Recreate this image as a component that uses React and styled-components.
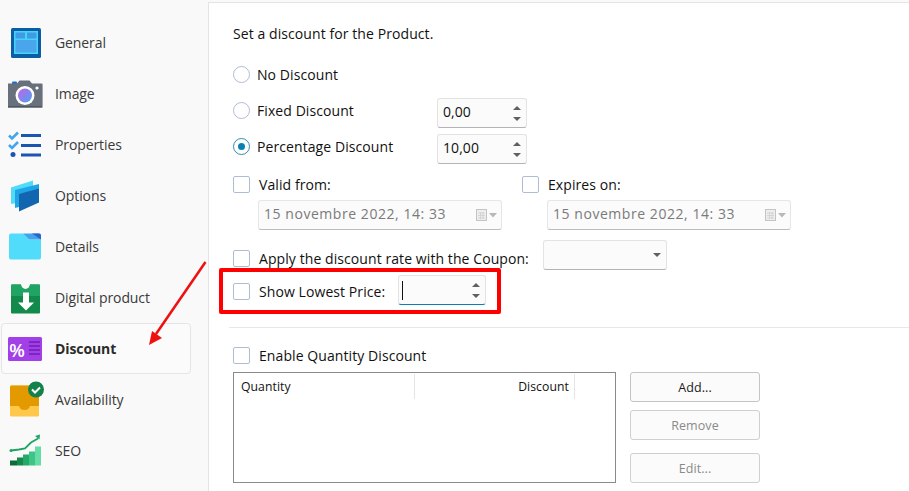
import React from 'react';
import styled, { createGlobalStyle } from 'styled-components';

const Global = createGlobalStyle`
  html, body { margin: 0; padding: 0; background: #f9f9f9; overflow: hidden; }
  body { font-family: "Open Sans", "Noto Sans", "Liberation Sans", sans-serif; font-size: 14px; color: #111; }
`;

const Page = styled.div`
  position: relative;
  display: flex;
  width: 909px;
  height: 491px;
  overflow: hidden;
  background: #f9f9f9;
`;

/* sidebar */
const Sidebar = styled.nav`
  flex: 0 0 208px;
  box-sizing: border-box;
  padding: 17px 17px 0 1px;
  display: flex;
  flex-direction: column;
`;
const NavItem = styled.div`
  box-sizing: border-box;
  height: 51px;
  flex: none;
  display: flex;
  align-items: center;
  gap: 10px;
  padding-left: 3px;
  border-radius: 4px;
  border: 1px solid ${p => (p.$active ? '#e5e5e5' : 'transparent')};
  background: ${p => (p.$active ? '#fbfbfb' : 'transparent')};
  color: ${p => (p.$active ? '#2b2b2b' : '#3a3a3a')};
  font-weight: ${p => (p.$active ? 700 : 400)};
  letter-spacing: -0.1px;
`;
const IconBox = styled.svg`
  flex: none;
  width: 40px;
  height: 40px;
`;

const GeneralIcon = () => (
  <IconBox viewBox="0 0 40 40">
    <rect x="6" y="5" width="30" height="30" rx="1.5" fill="#0b5ea6" />
    <rect x="9" y="8" width="24" height="23" fill="#46d3f4" />
    <rect x="10.5" y="9.5" width="9.5" height="6" fill="#3f9be6" />
    <rect x="22" y="9.5" width="9.5" height="6" fill="#3f9be6" />
    <rect x="10.5" y="17" width="21" height="12.5" fill="#49a6ec" />
  </IconBox>
);
const ImageIcon = () => (
  <IconBox viewBox="0 0 40 40">
    <rect x="7" y="7.500" width="5" height="4" rx="1" fill="#1f6fd0" />
    <path d="M3 9.500h9l2.500-3h10l2.500 3h9.600a1 1 0 0 1 1 1V33.500H3z" fill="#68717b" />
    <rect x="3" y="32" width="34" height="1.500" fill="#4f5660" />
    <circle cx="20" cy="21.500" r="9.500" fill="#fff" />
    <circle cx="20" cy="21.500" r="7" fill="url(#lens)" />
    <circle cx="32" cy="14" r="1.600" fill="#fff" />
    <defs>
      <linearGradient id="lens" x1="0" y1="0" x2="1" y2="1">
        <stop offset="0" stopColor="#c264e8" />
        <stop offset="1" stopColor="#4aa3f0" />
      </linearGradient>
    </defs>
  </IconBox>
);
const PropertiesIcon = () => (
  <IconBox viewBox="0 0 40 40">
    <path d="M4 10.500l3 3 6-6M4 20l3 3 6-6" fill="none" stroke="#42a5ee" strokeWidth="2.600" />
    <circle cx="8" cy="29.500" r="2.500" fill="#1c55b0" />
    <rect x="16" y="9" width="20" height="3" fill="#1c55b0" />
    <rect x="16" y="19" width="20" height="3" fill="#1c55b0" />
    <rect x="16" y="28.500" width="20" height="3" fill="#1c55b0" />
  </IconBox>
);
const OptionsIcon = () => (
  <IconBox viewBox="0 0 40 40">
    <path d="M6 11.500L28 4.500V24L6 28z" fill="#4fdcfb" />
    <path d="M10 14L34 8V26L10 32z" fill="#1fa5e6" />
    <path d="M14 18L34 12.500V26.500L14 35.500z" fill="#1266b0" />
  </IconBox>
);
const DetailsIcon = () => (
  <IconBox viewBox="0 0 40 40">
    <path d="M4 8.500a2 2 0 0 1 2-2h12l6 6h12v18a2 2 0 0 1-2 2H6a2 2 0 0 1-2-2z" fill="#52dcfb" />
    <path d="M18 6.500h16a2 2 0 0 1 2 2v4H24z" fill="#42a4ea" />
    <path d="M27 6.500h7a2 2 0 0 1 2 2v4z" fill="#2a64c8" />
  </IconBox>
);
const DigitalIcon = () => (
  <IconBox viewBox="0 0 40 40">
    <path d="M7 6.500h9a4.500 4.500 0 0 0 9 0h9a1 1 0 0 1 1 1v27a1 1 0 0 1-1 1H7a1 1 0 0 1-1-1v-27a1 1 0 0 1 1-1z" fill="#118a4c" />
    <path d="M6 7.500a1 1 0 0 1 1-1h9a4.500 4.500 0 0 0 9 0h9a1 1 0 0 1 1 1V18H6z" fill="#1fa463" />
    <path d="M18 14.500h6v10h5L21 32.500 13 24.500h5z" fill="#fff" />
  </IconBox>
);
const DiscountIcon = () => (
  <IconBox viewBox="0 0 40 40">
    <rect x="3" y="8" width="34" height="24" rx="1.500" fill="#a33fe6" />
    <text x="4.500" y="27.500" fontFamily="Liberation Sans, sans-serif" fontSize="19" fontWeight="700" fill="#fff" textLength="15" lengthAdjust="spacingAndGlyphs">%</text>
    <path d="M24 13h11M24 17h11M24 21h11M24 25h11" stroke="#6f1fb5" strokeWidth="1.600" />
  </IconBox>
);
const AvailabilityIcon = () => (
  <IconBox viewBox="0 0 40 40">
    <rect x="5" y="5.500" width="29" height="31" rx="1.500" fill="#ffc84a" />
    <path d="M5 7A1.500 1.500 0 0 1 6.500 5.500H32.500A1.500 1.500 0 0 1 34 7V26H25c-1 3-3 4-5.500 4S15 29 14 26H5z" fill="#e29a00" />
    <circle cx="31" cy="9.500" r="8" fill="#13824a" />
    <path d="M27 9.500l3 3 5-5" fill="none" stroke="#fff" strokeWidth="2" />
  </IconBox>
);
const SeoIcon = () => (
  <IconBox viewBox="0 0 40 40">
    <rect x="5" y="29.500" width="7" height="5" fill="#0e6b3a" />
    <rect x="12" y="26.500" width="6" height="8" fill="#14894c" />
    <rect x="18" y="23.500" width="6" height="11" fill="#25a96a" />
    <rect x="24" y="20.500" width="6" height="14" fill="#3cc587" />
    <rect x="30" y="15.500" width="6" height="19" fill="#66dca6" />
    <path d="M6 19.500l8-1 6-1 6-6 7-4" fill="none" stroke="#1ea563" strokeWidth="1.800" />
    <path d="M30 5l5-1.500-.5 5z" fill="#1ea563" />
    <circle cx="6" cy="19.500" r="1.500" fill="#1ea563" />
  </IconBox>
);

const navItems = [
  ['General', GeneralIcon],
  ['Image', ImageIcon],
  ['Properties', PropertiesIcon],
  ['Options', OptionsIcon],
  ['Details', DetailsIcon],
  ['Digital product', DigitalIcon],
  ['Discount', DiscountIcon],
  ['Availability', AvailabilityIcon],
  ['SEO', SeoIcon],
];

/* main form */
const Main = styled.main`
  flex: 1;
  min-width: 0;
  box-sizing: border-box;
  margin-top: 2px;
  padding: 21px 0 0 24px;
  background: #fff;
  border-top: 1px solid #e4e4e4;
  border-left: 1px solid #e4e4e4;
  letter-spacing: 0.08px;
`;
const Title = styled.div`
  height: 19px;
  line-height: 19px;
  margin-bottom: 19px;
`;
const Row = styled.div`
  display: flex;
  align-items: flex-start;
  height: ${p => p.$h || 30}px;
  margin-top: ${p => p.$mt || 0}px;
  margin-bottom: ${p => p.$mb || 0}px;
`;
/* holds the radio or check with its label; height sets where they sit in the row */
const Lead = styled.div`
  flex: none;
  display: flex;
  align-items: center;
  height: ${p => p.$h || 24}px;
  width: ${p => (p.$w ? `${p.$w}px` : 'auto')};
`;
const RadioCircle = styled.span`
  box-sizing: border-box;
  flex: none;
  width: 17px;
  height: 17px;
  border-radius: 50%;
  border: 1px solid ${p => (p.$on ? '#2a8fb5' : '#aebdd4')};
  background: #fff;
  display: flex;
  align-items: center;
  justify-content: center;
  &::after {
    content: '';
    display: ${p => (p.$on ? 'block' : 'none')};
    width: 7px;
    height: 7px;
    border-radius: 50%;
    background: #0a7fb0;
  }
`;
const Check = styled.span`
  box-sizing: border-box;
  flex: none;
  width: 17px;
  height: 17px;
  border-radius: 2px;
  border: 1px solid #aebdd4;
  background: #fff;
`;
const RadioLabel = styled.label`
  margin-left: 7px;
`;
const CheckLabel = styled.label`
  margin-left: 9px;
`;
const FieldBase = styled.div`
  box-sizing: border-box;
  flex: none;
  height: 30px;
  display: flex;
  align-items: center;
  border-radius: 3px;
  border: 1px solid #e3e3e3;
  border-bottom: 1px solid ${p => (p.$focus ? '#0a7fb0' : '#b4b4b4')};
  background: #fbfbfb;
`;
const FieldText = styled.span`
  margin-bottom: 3px;
`;
const Spin = styled(FieldBase)`
  width: ${p => p.$w}px;
  margin-left: ${p => p.$ml || 0}px;
  padding: 0 5px;
  justify-content: space-between;
`;
const SpinArrows = styled.span`
  display: flex;
  flex-direction: column;
  gap: 7px;
`;
const Tri = styled.span`
  display: block;
  width: 0;
  height: 0;
  border-left: 4px solid transparent;
  border-right: 4px solid transparent;
  border-${p => (p.$up ? 'bottom' : 'top')}: 4px solid #606060;
`;
const Caret = styled.span`
  display: block;
  width: 1px;
  height: 19px;
  margin-left: -2px;
  background: #111;
`;
const DateRow = styled.div`
  display: flex;
  margin-top: 4px;
`;
const DateField = styled(FieldBase)`
  width: 244px;
  margin-left: ${p => p.$ml}px;
  padding: 0 4px 0 5px;
  justify-content: space-between;
  color: #7a7a7a;
  letter-spacing: 0.55px;
  border-color: #e6e6e6;
  border-bottom-color: #bcbcbc;
`;
const DateGlyph = styled.span`
  display: flex;
  align-items: center;
  gap: 1px;
`;
const Select = styled(FieldBase)`
  width: 124px;
  margin-left: 14px;
  padding: 0 5px;
  justify-content: flex-end;
`;
const Divider = styled.hr`
  border: 0;
  height: 1px;
  background: #e8e8e8;
  margin: 22px 0 0 -4px;
`;
const Columns = styled.div`
  display: flex;
  gap: 14px;
`;
const Table = styled.div`
  box-sizing: border-box;
  width: 383px;
  height: 111px;
  border: 1px solid #8a8a8a;
  background: #fff;
`;
const TableHead = styled.div`
  display: flex;
  height: 25px;
  margin-top: 1px;
  font-size: 12.2px;
`;
const HeadCell = styled.div`
  box-sizing: border-box;
  width: ${p => p.$w}px;
  padding: 0 5px 0 7px;
  line-height: 25px;
  text-align: ${p => p.$align || 'left'};
  border-right: 1px solid #e5e5e5;
`;
const Buttons = styled.div`
  display: flex;
  flex-direction: column;
  width: 130px;
`;
const Btn = styled.div`
  box-sizing: border-box;
  height: 30px;
  margin-top: ${p => p.$mt || 0}px;
  display: flex;
  align-items: center;
  justify-content: center;
  border-radius: 3px;
  border: 1px solid ${p => (p.$off ? '#cfcfcf' : '#c4c4c4')};
  background: #fbfbfb;
  font-size: 12.5px;
  color: ${p => (p.$off ? '#8a8a8a' : '#1a1a1a')};
`;

/* annotations on top of the screenshot */
const RedBox = styled.div`
  position: absolute;
  left: 219px;
  top: 268px;
  width: 282px;
  height: 46px;
  box-sizing: border-box;
  border: 4px solid #f00;
  border-radius: 2px;
  pointer-events: none;
`;
const ArrowSvg = styled.svg`
  position: absolute;
  left: 140px;
  top: 255px;
  width: 70px;
  height: 95px;
  pointer-events: none;
`;

const Calendar = () => (
  <DateGlyph>
    <svg width="12" height="13" viewBox="0 0 12 13">
      <rect x=".5" y=".5" width="10" height="11" fill="#eee" stroke="#c4c4c4" />
      <path d="M2 4h7M2 6.500h7M2 9h7M4.500 3v7M7 3v7" stroke="#cfcfcf" strokeWidth=".8" />
    </svg>
    <svg width="8" height="5" viewBox="0 0 8 5"><path d="M0 0h8L4 4.500z" fill="#b8b8b8" /></svg>
  </DateGlyph>
);

const Arrows = () => (
  <SpinArrows><Tri $up /><Tri /></SpinArrows>
);

export default function App() {
  return (
    <Page>
      <Global />
      <Sidebar>
        {navItems.map(([label, Icon]) => (
          <NavItem key={label} $active={label === 'Discount'}>
            <Icon />
            <span>{label}</span>
          </NavItem>
        ))}
      </Sidebar>
      <Main>
        <Title>Set a discount for the Product.</Title>
        <Row $h={24}>
          <Lead><RadioCircle /><RadioLabel>No Discount</RadioLabel></Lead>
        </Row>
        <Row $mt={12}>
          <Lead $w={204}><RadioCircle /><RadioLabel>Fixed Discount</RadioLabel></Lead>
          <Spin $w={90}><FieldText>0,00</FieldText><Arrows /></Spin>
        </Row>
        <Row $mt={6}>
          <Lead $w={204}><RadioCircle $on /><RadioLabel>Percentage Discount</RadioLabel></Lead>
          <Spin $w={90}><FieldText>10,00</FieldText><Arrows /></Spin>
        </Row>
        <Row $h={24} $mt={8}>
          <Lead $w={289}><Check /><CheckLabel>Valid from:</CheckLabel></Lead>
          <Lead><Check /><CheckLabel>Expires on:</CheckLabel></Lead>
        </Row>
        <DateRow>
          <DateField $ml={25}><FieldText>15 novembre 2022, 14: 33</FieldText><Calendar /></DateField>
          <DateField $ml={45}><FieldText>15 novembre 2022, 14: 33</FieldText><Calendar /></DateField>
        </DateRow>
        <Row $mt={10}>
          <Lead $h={36}><Check /><CheckLabel>Apply the discount rate with the Coupon:</CheckLabel></Lead>
          <Select><Tri /></Select>
        </Row>
        <Row $mt={5}>
          <Lead $h={32}><Check /><CheckLabel>Show Lowest Price:</CheckLabel></Lead>
          <Spin $w={88} $ml={13} $focus><Caret /><Arrows /></Spin>
        </Row>
        <Divider />
        <Row $h={24} $mt={15} $mb={5}>
          <Lead><Check /><CheckLabel>Enable Quantity Discount</CheckLabel></Lead>
        </Row>
        <Columns>
          <Table>
            <TableHead>
              <HeadCell $w={181}>Quantity</HeadCell>
              <HeadCell $w={160} $align="right">Discount</HeadCell>
            </TableHead>
          </Table>
          <Buttons>
            <Btn>Add...</Btn>
            <Btn $off $mt={8}>Remove</Btn>
            <Btn $off $mt={13}>Edit...</Btn>
          </Buttons>
        </Columns>
      </Main>
      <RedBox />
      <ArrowSvg viewBox="0 0 70 95">
        <path d="M65.500 7L16 79" stroke="#ee1111" strokeWidth="2.500" fill="none" />
        <path d="M9 90L12 76L22 83z" fill="#ee1111" />
      </ArrowSvg>
    </Page>
  );
}
